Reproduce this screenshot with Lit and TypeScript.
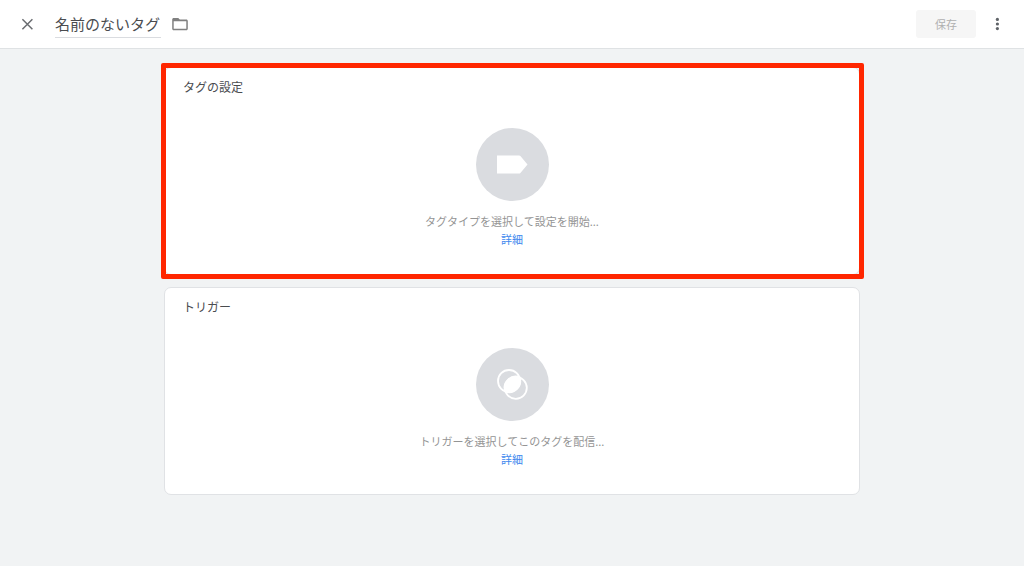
import { LitElement, html, css, svg, type TemplateResult } from "lit";
import { customElement, property } from "lit/decorators.js";

const closeIcon = html`<svg width="16" height="16" viewBox="0 0 16 16" fill="none" stroke="#6a6d71" stroke-width="1.5" aria-hidden="true">
  <path d="M3.4 3.2 13.4 13.2M13.4 3.2 3.4 13.2" />
</svg>`;

const folderIcon = html`<svg width="18" height="16" viewBox="0 0 18 16" aria-hidden="true">
  <path fill="#808080" fill-rule="evenodd" d="M2.7 2h4.6l1.5 1.6h6.5c.9 0 1.5.6 1.5 1.5v7.700c0 .9-.6 1.500-1.500 1.500H2.700c-.9 0-1.500-.6-1.500-1.500V3.500c0-.9.600-1.500 1.500-1.500zM2.700 5.200v7.600h12.600V5.200z" />
</svg>`;

const moreIcon = html`<svg width="16" height="16" viewBox="0 0 16 16" fill="#5f6368" aria-hidden="true">
  <circle cx="8.4" cy="3.400" r="1.600" /><circle cx="8.4" cy="8" r="1.600" /><circle cx="8.4" cy="12.600" r="1.600" />
</svg>`;

const tagShape = svg`<path fill="#fff" d="M21 27.500h22.200c.5 0 .9.200 1.200.6l7.100 8.400-7.100 8.400c-.3.400-.7.600-1.200.6H21z" />`;

const triggerShape = svg`
  <g fill="none" stroke="#fff" stroke-width="1.800">
    <circle cx="33" cy="33" r="11" />
    <circle cx="39.800" cy="39.800" r="11" />
  </g>
  <path fill="#fff" d="M44.200 28.600A12 12 0 0 1 28.600 44.200A12 12 0 0 1 44.200 28.600z" />`;

@customElement("setup-card")
export class SetupCard extends LitElement {
  @property() heading = "";
  @property() caption = "";
  @property({ attribute: false }) shape?: TemplateResult;
  @property({ type: Boolean, reflect: true }) highlighted = false;

  static styles = css`
    :host {
      display: block;
      position: relative;
      background: #fff;
      border: 1px solid #e0e2e5;
      border-radius: 7px;
      padding: 10px 18px 26px;
      color: #4a4c4f;
    }
    :host([highlighted])::after {
      content: "";
      position: absolute;
      inset: -5px -5px -5px -4px;
      border: 5px solid #ff2600;
      border-radius: 2px;
      pointer-events: none;
    }
    .heading {
      margin: 0 0 32px;
      font-size: 12px;
      line-height: 18px;
      font-weight: 400;
    }
    .body {
      display: flex;
      flex-direction: column;
      align-items: center;
      font-size: 11px;
      line-height: 18px;
    }
    .choose {
      display: block;
      padding: 0;
      border: 0;
      border-radius: 50%;
      background: #dadce0;
      cursor: pointer;
    }
    .choose svg {
      display: block;
    }
    .caption {
      margin: 11px 0 0;
      color: #949494;
    }
    .more {
      color: #4088ee;
      text-decoration: none;
    }
  `;

  render() {
    return html`
      <h2 class="heading">${this.heading}</h2>
      <div class="body">
        <button class="choose" type="button" aria-label=${this.heading}>
          <svg width="73" height="73" viewBox="0 0 73 73" aria-hidden="true">${this.shape}</svg>
        </button>
        <p class="caption">${this.caption}</p>
        <a class="more" href="#">詳細</a>
      </div>
    `;
  }
}

@customElement("app-root")
export class AppRoot extends LitElement {
  static styles = css`
    :host {
      display: flex;
      flex-direction: column;
      min-height: 100vh;
      background: #f1f3f4;
      font-family: "Noto Sans CJK JP", sans-serif;
    }
    .bar {
      display: flex;
      align-items: center;
      box-sizing: border-box;
      height: 49px;
      padding: 0 19px;
      background: #fff;
      border-bottom: 1px solid #dfe2e4;
    }
    .icon {
      display: flex;
      padding: 0;
      border: 0;
      background: none;
      cursor: pointer;
    }
    .name {
      box-sizing: border-box;
      width: 106px;
      height: 28px;
      margin: 0 10px 0 20px;
      padding: 0;
      border: 0;
      border-bottom: 1px solid #dadce0;
      background: none;
      color: #4a4c4f;
      font: inherit;
      font-size: 15px;
    }
    .save {
      height: 28px;
      width: 60px;
      margin: 0 13px 0 auto;
      padding: 0;
      border: 0;
      border-radius: 3px;
      background: #f6f6f6;
      color: #b0b0b0;
      font: inherit;
      font-size: 11px;
    }
    .content {
      display: flex;
      flex-direction: column;
      gap: 12px;
      box-sizing: border-box;
      width: 100%;
      max-width: 728px;
      margin: 0 auto;
      padding: 18px 16px;
    }
  `;

  render() {
    return html`
      <header class="bar">
        <button class="icon" type="button" aria-label="閉じる">${closeIcon}</button>
        <input class="name" type="text" aria-label="タグ名" .value=${"名前のないタグ"} />
        <button class="icon" type="button" aria-label="フォルダ">${folderIcon}</button>
        <button class="save" type="button" disabled>保存</button>
        <button class="icon" type="button" aria-label="その他">${moreIcon}</button>
      </header>
      <main class="content">
        <setup-card
          highlighted
          heading="タグの設定"
          caption="タグタイプを選択して設定を開始..."
          .shape=${tagShape}
        ></setup-card>
        <setup-card
          heading="トリガー"
          caption="トリガーを選択してこのタグを配信..."
          .shape=${triggerShape}
        ></setup-card>
      </main>
    `;
  }
}
